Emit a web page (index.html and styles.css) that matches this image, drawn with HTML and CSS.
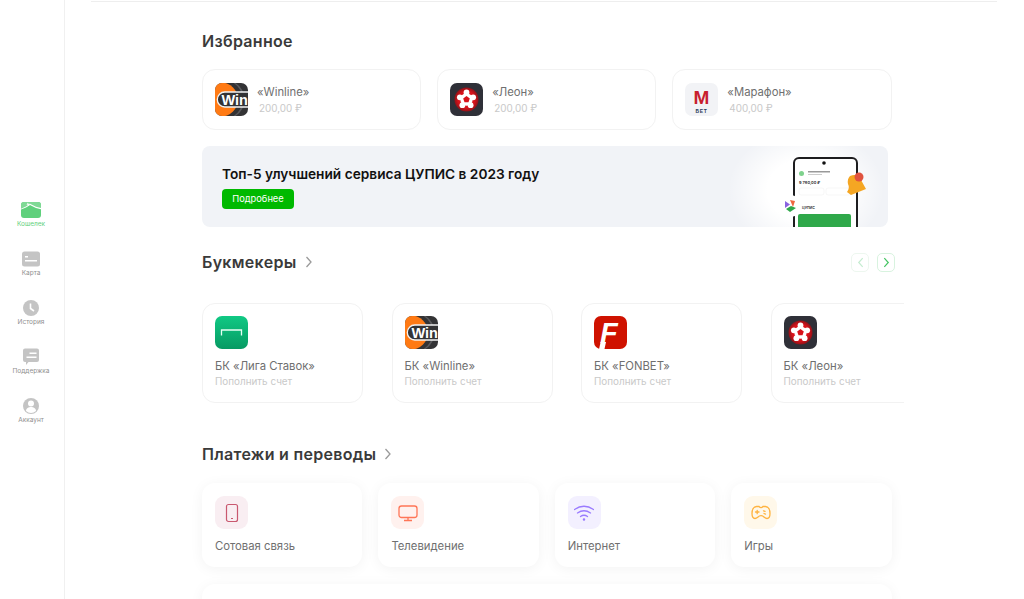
FILE: index.html
```html
<!DOCTYPE html>
<html lang="ru">

<head>
    <meta charset="utf-8">
    <title>Кошелек</title>
    <link rel="stylesheet" href="styles.css">
</head>

<body>

    <svg class="defs" width="0" height="0" aria-hidden="true">
        <defs>
            <clipPath id="logo-clip">
                <rect width="33" height="33" rx="7" />
            </clipPath>
            <radialGradient id="leon-red">
                <stop offset="0.700" stop-color="#d8121a" />
                <stop offset="1" stop-color="#8f1219" />
            </radialGradient>
            <linearGradient id="liga" x1="0" y1="0" x2="0" y2="1">
                <stop offset="0" stop-color="#10c984" />
                <stop offset="1" stop-color="#079a63" />
            </linearGradient>
            <radialGradient id="glow">
                <stop offset="0.500" stop-color="#fff" />
                <stop offset="1" stop-color="#fff" stop-opacity="0" />
            </radialGradient>
        </defs>
    </svg>

    <div class="app">
        <nav class="sidebar">
            <a href="#" class="side-item active">
                <svg class="side-icon" viewBox="0 0 20 20">
                    <rect y="2" width="20" height="16" rx="3" fill="#5fd07c" />
                    <path d="M0 9v-4a3 3 0 0 1 3-3h14a3 3 0 0 1 3 3v4l-5-1.500-6-2.500-4 2z" fill="#7fd995" />
                    <path d="M0 9.500l5-2 4-2.500 6 3 5 1.300v-1.300l-5-1.200-6-3-4 2.700-5 2.200z" fill="#fff" />
                    <path d="M7 2.500l-1.500 2.200h1.500l-.5 1.500 2.200-2.400h-1.500z" fill="#fff" />
                </svg>
                <span>Кошелек</span>
            </a>
            <a href="#" class="side-item">
                <svg class="side-icon" viewBox="0 0 20 20">
                    <rect x="1" y="2.500" width="18" height="15" rx="2.500" fill="#c4c4c4" />
                    <rect x="4" y="7" width="3" height="1.500" fill="#fff" />
                    <rect x="4" y="11" width="12" height="1.500" fill="#fff" />
                </svg>
                <span>Карта</span>
            </a>
            <a href="#" class="side-item">
                <svg class="side-icon" viewBox="0 0 20 20">
                    <circle cx="10" cy="10" r="8" fill="#c4c4c4" />
                    <path d="M9.500 5.500v5l3.500 2.500" fill="none" stroke="#fff" stroke-width="1.600" />
                </svg>
                <span>История</span>
            </a>
            <a href="#" class="side-item">
                <svg class="side-icon" viewBox="0 0 20 20">
                    <path d="M4 1.500h12a2 2 0 0 1 2 2v9.500a2 2 0 0 1-2 2h-8.500l-2.500 3v-3h-1a2 2 0 0 1-2-2v-9.500a2 2 0 0 1 2-2z" fill="#c4c4c4" />
                    <rect x="8.500" y="5.500" width="7" height="1.500" fill="#fff" />
                    <rect x="5.500" y="9.500" width="10" height="1.500" fill="#fff" />
                </svg>
                <span>Поддержка</span>
            </a>
            <a href="#" class="side-item">
                <svg class="side-icon" viewBox="0 0 20 20">
                    <circle cx="10" cy="10" r="8" fill="#c4c4c4" />
                    <circle cx="10" cy="7.500" r="3" fill="#fff" />
                    <path d="M5 15c0-2.800 2.700-4 5-4s5 1.200 5 4a7.500 7.500 0 0 1-10 0z" fill="#fff" />
                </svg>
                <span>Аккаунт</span>
            </a>
        </nav>

        <main class="main">
            <div class="topline"></div>

            <div class="content">
                <h2 class="title fav-title">Избранное</h2>

                <div class="fav-list">
                    <a href="#" class="fav-card">
                        <svg class="logo" viewBox="0 0 33 33">
                            <g clip-path="url(#logo-clip)">
                                <rect width="33" height="33" fill="#333335" />
                                <circle cx="6" cy="16.500" r="17" fill="#ff7a14" />
                                <path d="M17 -1h2a20 20 0 0 1 0 35h-2a20 20 0 0 0 0 -35z" fill="#5a5a5d" />
                                <rect x="2.300" y="9" width="40" height="15" rx="7.500" fill="#333335" stroke="#f2f2f2" stroke-width="1.300" />
                                <text x="6.500" y="21.500" class="win-text">Win</text>
                            </g>
                        </svg>
                        <div class="fav-info">
                            <div class="card-name">«Winline»</div>
                            <div class="card-sub">200,00 ₽</div>
                        </div>
                    </a>
                    <a href="#" class="fav-card">
                        <svg class="logo" viewBox="0 0 33 33">
                            <rect width="33" height="33" rx="7" fill="#2f3038" />
                            <circle cx="16.500" cy="16.500" r="12" fill="url(#leon-red)" />
                            <g fill="#fff">
                                <circle cx="16.500" cy="9.500" r="2.900" />
                                <circle cx="23.160" cy="14.340" r="2.900" />
                                <circle cx="20.610" cy="22.160" r="2.900" />
                                <circle cx="12.390" cy="22.160" r="2.900" />
                                <circle cx="9.840" cy="14.340" r="2.900" />
                                <circle cx="16.500" cy="16.500" r="6.200" />
                            </g>
                            <polygon points="16.500,13 19.800,15.400 18.500,19.300 14.500,19.300 13.200,15.400" fill="#d8121a" />
                        </svg>
                        <div class="fav-info">
                            <div class="card-name">«Леон»</div>
                            <div class="card-sub">200,00 ₽</div>
                        </div>
                    </a>
                    <a href="#" class="fav-card">
                        <svg class="logo" viewBox="0 0 33 33">
                            <rect width="33" height="33" rx="7" fill="#f2f3f6" />
                            <text x="16.500" y="21" class="mbet-m">M</text>
                            <text x="16.500" y="29.500" class="mbet-bet">БЕТ</text>
                        </svg>
                        <div class="fav-info">
                            <div class="card-name">«Марафон»</div>
                            <div class="card-sub">400,00 ₽</div>
                        </div>
                    </a>
                </div>

                <section class="banner">
                    <div class="banner-text">Топ-5 улучшений сервиса ЦУПИС в 2023 году</div>
                    <a href="#" class="banner-btn">Подробнее</a>
                    <svg class="banner-art" viewBox="0 0 160 81">
                        <ellipse cx="82" cy="44" rx="78" ry="62" fill="url(#glow)" />
                        <rect x="70" y="12" width="63" height="80" rx="5" fill="#fff" stroke="#1d1d1f" stroke-width="2" />
                        <circle cx="100" cy="17" r="1.800" fill="#111" />
                        <rect x="75" y="25" width="5" height="5" rx="2.500" fill="#7fd28d" />
                        <rect x="84" y="25" width="22" height="1.500" fill="#999" />
                        <rect x="84" y="28" width="14" height="1" fill="#ccc" />
                        <text x="75" y="38" class="art-sum">9 780,00 ₽</text>
                        <rect x="75" y="42" width="25" height="7" rx="2" fill="#fff" stroke="#eee" stroke-width="0.500" />
                        <rect x="102" y="42" width="25" height="7" rx="2" fill="#fff" stroke="#eee" stroke-width="0.500" />
                        <text x="78" y="63" class="art-label">ЦУПИС</text>
                        <rect x="74" y="68" width="53" height="16" rx="2" fill="#2fa84a" />
                        <path d="M126 30q8-3 11 4l5 9-15 6-4-3q3-4 1-8-1-5 2-8z" fill="#f5a623" />
                        <circle cx="135" cy="31" r="4.500" fill="#e0533f" />
                        <circle cx="66" cy="60" r="11" fill="#fff" />
                        <path d="M61 55l5 3.500-5 3.500z" fill="#8a63e0" />
                        <path d="M66 54l5 1-2 6z" fill="#f0663f" />
                        <path d="M62 63l5-3 5 2-6 4z" fill="#2fa84a" />
                    </svg>
                </section>

                <div class="section-head book-head">
                    <h2 class="title">Букмекеры
                        <svg class="chevron" viewBox="0 0 8 12"><path d="M1.500 1l4.500 5-4.500 5" /></svg>
                    </h2>
                    <div class="arrows">
                        <button class="arrow-btn disabled">
                            <svg viewBox="0 0 8 12"><path d="M6.500 1l-4.500 5 4.500 5" /></svg>
                        </button>
                        <button class="arrow-btn">
                            <svg viewBox="0 0 8 12"><path d="M1.500 1l4.500 5-4.500 5" /></svg>
                        </button>
                    </div>
                </div>

                <div class="book-list">
                    <a href="#" class="book-card">
                        <svg class="logo" viewBox="0 0 33 33">
                            <rect width="33" height="33" rx="7" fill="url(#liga)" />
                            <path d="M6.500 19.500v-5.500h20v5.500" fill="none" stroke="#e8fff5" stroke-width="1.300" />
                        </svg>
                        <div class="card-name">БК «Лига Ставок»</div>
                        <div class="card-sub">Пополнить счет</div>
                    </a>
                    <a href="#" class="book-card">
                        <svg class="logo" viewBox="0 0 33 33">
                            <g clip-path="url(#logo-clip)">
                                <rect width="33" height="33" fill="#333335" />
                                <circle cx="6" cy="16.500" r="17" fill="#ff7a14" />
                                <path d="M17 -1h2a20 20 0 0 1 0 35h-2a20 20 0 0 0 0 -35z" fill="#5a5a5d" />
                                <rect x="2.300" y="9" width="40" height="15" rx="7.500" fill="#333335" stroke="#f2f2f2" stroke-width="1.300" />
                                <text x="6.500" y="21.500" class="win-text">Win</text>
                            </g>
                        </svg>
                        <div class="card-name">БК «Winline»</div>
                        <div class="card-sub">Пополнить счет</div>
                    </a>
                    <a href="#" class="book-card">
                        <svg class="logo" viewBox="0 0 33 33">
                            <rect width="33" height="33" rx="7" fill="#cf1200" />
                            <text x="6" y="26.500" class="fonbet-f">F</text>
                            <polygon points="6.600,26 12,26 10.500,33 5.100,33" fill="#fff" />
                        </svg>
                        <div class="card-name">БК «FONBET»</div>
                        <div class="card-sub">Пополнить счет</div>
                    </a>
                    <a href="#" class="book-card">
                        <svg class="logo" viewBox="0 0 33 33">
                            <rect width="33" height="33" rx="7" fill="#2f3038" />
                            <circle cx="16.500" cy="16.500" r="12" fill="url(#leon-red)" />
                            <g fill="#fff">
                                <circle cx="16.500" cy="9.500" r="2.900" />
                                <circle cx="23.160" cy="14.340" r="2.900" />
                                <circle cx="20.610" cy="22.160" r="2.900" />
                                <circle cx="12.390" cy="22.160" r="2.900" />
                                <circle cx="9.840" cy="14.340" r="2.900" />
                                <circle cx="16.500" cy="16.500" r="6.200" />
                            </g>
                            <polygon points="16.500,13 19.800,15.400 18.500,19.300 14.500,19.300 13.200,15.400" fill="#d8121a" />
                        </svg>
                        <div class="card-name">БК «Леон»</div>
                        <div class="card-sub">Пополнить счет</div>
                    </a>
                </div>

                <h2 class="title pay-title">Платежи и переводы
                    <svg class="chevron" viewBox="0 0 8 12"><path d="M1.500 1l4.500 5-4.500 5" /></svg>
                </h2>

                <div class="pay-list">
                    <a href="#" class="pay-card">
                        <span class="pay-icon pink">
                            <svg viewBox="0 0 20 20" fill="none" stroke="#c9586f" stroke-width="1.200">
                                <rect x="4.500" y="1.500" width="11" height="17" rx="2" />
                                <path d="M9 15.500h2" />
                            </svg>
                        </span>
                        <div class="card-name">Сотовая связь</div>
                    </a>
                    <a href="#" class="pay-card">
                        <span class="pay-icon coral">
                            <svg viewBox="0 0 20 20" fill="none" stroke="#ff7657" stroke-width="1.300">
                                <rect x="1" y="3" width="18" height="11.500" rx="2.500" />
                                <path d="M6 17.500h8M10 14.500v3" />
                            </svg>
                        </span>
                        <div class="card-name">Телевидение</div>
                    </a>
                    <a href="#" class="pay-card">
                        <span class="pay-icon violet">
                            <svg viewBox="0 0 20 20" fill="none" stroke="#9a7bff" stroke-width="1.300" stroke-linecap="round">
                                <path d="M.500 6.500q9.500-6.500 19 0" />
                                <path d="M3.500 10q6.500-4.500 13 0" />
                                <path d="M6.500 13.500q3.500-2.500 7 0" />
                                <circle cx="10" cy="16.500" r=".6" fill="#9a7bff" />
                            </svg>
                        </span>
                        <div class="card-name">Интернет</div>
                    </a>
                    <a href="#" class="pay-card">
                        <span class="pay-icon amber">
                            <svg viewBox="0 0 20 20" fill="none" stroke="#ffb340" stroke-width="1.300" stroke-linecap="round">
                                <path d="M5.500 3.500h2.500q1 1.200 2 1.200t2-1.200h2.500c3 0 4.500 3.500 4.500 7 0 3-1 5-3 5-2.500 0-3-2.800-6-2.800s-3.500 2.800-6 2.800c-2 0-3-2-3-5 0-3.500 1.500-7 4.500-7z" />
                                <path d="M4.500 9h3.500M6.200 7.300v3.400M12.500 7.800l1.500.6M13 10.500l1.500.6" />
                            </svg>
                        </span>
                        <div class="card-name">Игры</div>
                    </a>
                </div>

                <div class="wide-card"></div>
            </div>
        </main>
    </div>

</body>

</html>
```

FILE: styles.css
```css
* {
    box-sizing: border-box;
}

html,
body {
    margin: 0;
    height: 100%;
    background: #fff;
    overflow: hidden;
}

body {
    font-family: Inter, "Noto Sans", sans-serif;
    color: #3a3a3a;
}

a {
    text-decoration: none;
    color: inherit;
}

.defs {
    position: absolute;
}

.win-text {
    font-family: "Liberation Sans", sans-serif;
    font-size: 14.500px;
    font-weight: 700;
    fill: #fff;
}

.app {
    display: flex;
    height: 599px;
    overflow: hidden;
}

/* боковое меню */
.sidebar {
    width: 65px;
    flex-shrink: 0;
    border-right: 1px solid #f0f0f0;
    padding-top: 200px;
    display: flex;
    flex-direction: column;
    gap: 20px;
}

.side-item {
    width: 62px;
    height: 29px;
    display: flex;
    flex-direction: column;
    align-items: center;
    font-size: 6.500px;
    line-height: 9px;
    color: #8f8f8f;
}

.side-item.active {
    color: #5fd07c;
}

.side-icon {
    width: 20px;
    height: 20px;
    flex-shrink: 0;
}

/* основная часть */
.main {
    flex: 1;
    min-width: 0;
}

.topline {
    height: 1px;
    margin: 1px 27px 0 26px;
    background: #eeeeee;
}

.content {
    padding-left: 137px;
}

.title {
    margin: 0;
    font-size: 16px;
    line-height: 20px;
    font-weight: 600;
    letter-spacing: 0.300px;
    color: #3a3a3a;
    display: flex;
    align-items: center;
    gap: 8px;
}

.chevron {
    width: 8px;
    height: 12px;
    fill: none;
    stroke: #9a9a9a;
    stroke-width: 1.300;
}

.fav-title {
    margin-top: 29px;
}

.logo {
    width: 33px;
    height: 33px;
    display: block;
    flex-shrink: 0;
}

.card-name {
    font-size: 11.300px;
    line-height: 15px;
    color: #6f6f6f;
}

.card-sub {
    font-size: 9.900px;
    line-height: 14px;
    color: #c9c9c9;
}

/* избранное */
.fav-list {
    display: flex;
    gap: 16px;
    width: 689.500px;
    margin-top: 18px;
}

.fav-card {
    flex: 1;
    height: 61px;
    padding: 0 12px;
    border: 1px solid #f2f2f2;
    border-radius: 13px;
    display: flex;
    align-items: center;
    gap: 9px;
}

.fav-info .card-sub {
    margin-top: 1px;
    padding-left: 2px;
}

.mbet-m {
    font-family: "Liberation Sans", sans-serif;
    font-size: 19px;
    font-weight: 700;
    text-anchor: middle;
    fill: #c8202e;
}

.mbet-bet {
    font-family: "Liberation Sans", sans-serif;
    font-size: 5px;
    font-weight: 700;
    letter-spacing: 0.600px;
    text-anchor: middle;
    fill: #2c3e5c;
}

.fonbet-f {
    font-family: "Liberation Sans", sans-serif;
    font-size: 29px;
    font-weight: 700;
    font-style: italic;
    fill: #fff;
}

/* баннер */
.banner {
    position: relative;
    width: 686px;
    height: 81px;
    margin-top: 16px;
    padding: 18px 20px 0;
    background: #f1f3f7;
    border-radius: 8px;
    overflow: hidden;
}

.banner-text {
    font-size: 13.700px;
    line-height: 20px;
    font-weight: 600;
    color: #111;
}

.banner-btn {
    display: block;
    width: 72px;
    height: 20px;
    margin-top: 5px;
    background: #00b900;
    border-radius: 4px;
    color: #fff;
    font-size: 9.300px;
    line-height: 20px;
    text-align: center;
}

.banner-art {
    position: absolute;
    right: 4px;
    top: 0;
    width: 160px;
    height: 81px;
}

.art-sum {
    font-size: 4px;
    font-weight: 600;
    fill: #222;
}

.art-label {
    font-size: 3.500px;
    font-weight: 600;
    fill: #222;
}

/* букмекеры */
.section-head {
    display: flex;
    justify-content: space-between;
    align-items: center;
    width: 693px;
}

.book-head {
    margin-top: 25px;
}

.arrows {
    display: flex;
    gap: 8px;
}

.arrow-btn {
    width: 18px;
    height: 19px;
    padding: 0;
    background: #fff;
    border: 1px solid #d8f3df;
    border-radius: 5px;
    display: flex;
    align-items: center;
    justify-content: center;
}

.arrow-btn svg {
    width: 7px;
    height: 11px;
    fill: none;
    stroke: #45c463;
    stroke-width: 1.400;
}

.arrow-btn.disabled {
    border-color: #edf7ef;
}

.arrow-btn.disabled svg {
    stroke: #c5ecd0;
}

.book-list {
    display: flex;
    gap: 28.500px;
    width: 702px;
    margin-top: 31px;
    overflow: hidden;
}

.book-card {
    width: 161px;
    height: 100px;
    flex-shrink: 0;
    padding: 12px 12px 0;
    border: 1px solid #f2f2f2;
    border-radius: 13px;
}

.book-card .card-name {
    margin-top: 10px;
}

/* платежи */
.pay-title {
    margin-top: 41px;
}

.pay-list {
    display: flex;
    gap: 16px;
    width: 689.500px;
    margin-top: 19px;
}

.pay-card {
    flex: 1;
    height: 84px;
    padding: 13px 13px 0;
    background: #fff;
    border-radius: 13px;
    box-shadow: 0 2px 14px rgba(0, 0, 0, 0.05);
}

.pay-icon {
    display: flex;
    align-items: center;
    justify-content: center;
    width: 33px;
    height: 33px;
    border-radius: 9px;
}

.pay-icon svg {
    width: 20px;
    height: 20px;
}

.pink {
    background: #f9eef2;
}

.coral {
    background: #fff1ee;
}

.violet {
    background: #f3f0ff;
}

.amber {
    background: #fff8ea;
}

.pay-card .card-name {
    margin-top: 10px;
}

.wide-card {
    width: 689.500px;
    height: 60px;
    margin-top: 17px;
    background: #fff;
    border-radius: 13px;
    box-shadow: 0 2px 14px rgba(0, 0, 0, 0.05);
}
```
